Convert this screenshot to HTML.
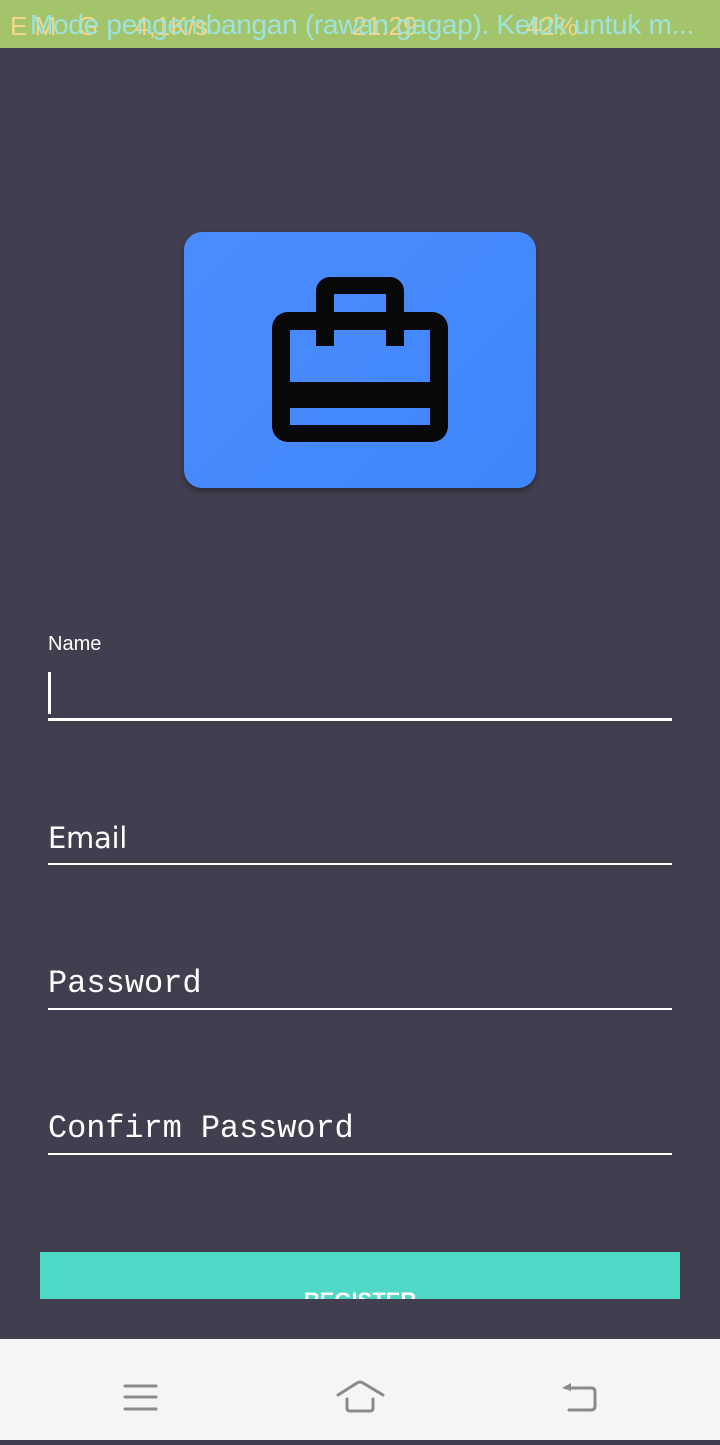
<!DOCTYPE html>
<html><head><meta charset="utf-8"><style>
*{margin:0;padding:0;box-sizing:border-box}
html,body{width:720px;height:1440px}
body{background:#413e50;position:relative;overflow:hidden;font-family:"Liberation Sans",sans-serif}
.sb{position:absolute;left:0;top:0;width:720px;height:48px;background:#a3c46a}
.sb .a{position:absolute;left:10px;top:11px;font-size:26px;color:#f5d58a;white-space:nowrap}
.sb .b{position:absolute;left:30px;top:9px;font-size:28px;color:#9ee3dc;white-space:nowrap;letter-spacing:-0.3px}
.box{position:absolute;left:184px;top:232px;width:352px;height:256px;border-radius:18px;background:linear-gradient(135deg,#4b8cfd,#3f86fd);box-shadow:0 3px 6px rgba(0,0,0,.35)}
.lab{position:absolute;color:#fff;white-space:nowrap}
.ul{position:absolute;left:48px;width:624px;background:#fff}
.btn{position:absolute;left:40px;top:1252px;width:640px;height:47px;background:#50d8c7;overflow:hidden}
.btn span{position:absolute;left:0;width:640px;text-align:center;top:36px;color:#fff;font-size:22px;font-weight:bold}
.nav{position:absolute;left:0;top:1339px;width:720px;height:101px;background:#f5f5f5}
</style></head><body>
<div class="sb"><div class="a">E M &nbsp; G &nbsp;&nbsp;&nbsp; 4,1K/s &nbsp;&nbsp;&nbsp;&nbsp;&nbsp;&nbsp;&nbsp;&nbsp;&nbsp;&nbsp;&nbsp;&nbsp;&nbsp;&nbsp;&nbsp;&nbsp;&nbsp;&nbsp;&nbsp;21:29 &nbsp;&nbsp;&nbsp;&nbsp;&nbsp;&nbsp;&nbsp;&nbsp;&nbsp;&nbsp;&nbsp;&nbsp;&nbsp;&nbsp;42%</div><div class="b">Mode pengembangan (rawan gagap). Ketuk untuk m...</div></div>
<div class="box"></div>
<svg style="position:absolute;left:0;top:0" width="720" height="600">
<path fill="#080808" fill-rule="evenodd" d="M288 312H432A16 16 0 0 1 448 328V426A16 16 0 0 1 432 442H288A16 16 0 0 1 272 426V328A16 16 0 0 1 288 312ZM290 330V382H430V330ZM290 408V425H430V408Z"/>
<path fill="#080808" fill-rule="evenodd" d="M330 277H390A14 14 0 0 1 404 291V346H386V294H334V346H316V291A14 14 0 0 1 330 277Z"/>
</svg>
<div class="lab" style="left:48px;top:633px;font-size:20px">Name</div>
<div style="position:absolute;left:48px;top:672px;width:3px;height:42px;background:#fff"></div>
<div class="ul" style="top:718px;height:3px"></div>
<div class="lab" style="left:48px;top:821px;font-size:29px;font-family:'DejaVu Sans',sans-serif;letter-spacing:-0.3px">Email</div>
<div class="ul" style="top:863px;height:2px"></div>
<div class="lab" style="left:48px;top:965px;font-size:32px;font-family:'Liberation Mono',monospace">Password</div>
<div class="ul" style="top:1008px;height:2px"></div>
<div class="lab" style="left:48px;top:1110px;font-size:32px;font-family:'Liberation Mono',monospace;letter-spacing:-0.1px">Confirm Password</div>
<div class="ul" style="top:1153px;height:2px"></div>
<div class="btn"><span>REGISTER</span></div>
<div class="nav">
<svg width="720" height="101">
<g stroke="#8a8a8a" stroke-width="3" stroke-linecap="round" fill="none">
<path d="M125 47H156M125 58H156M125 70H156"/>
<path d="M338 56L357 44Q360 42 363 44L383 56"/>
<path d="M347 60V69Q347 72 350 72H370Q373 72 373 69V60"/>
<path d="M566 49H591Q595 49 595 53V67Q595 71 591 71H569"/>
</g>
<path d="M562 49L571 44V52Z" fill="#8a8a8a"/>
</svg>
</div>
</body></html>
